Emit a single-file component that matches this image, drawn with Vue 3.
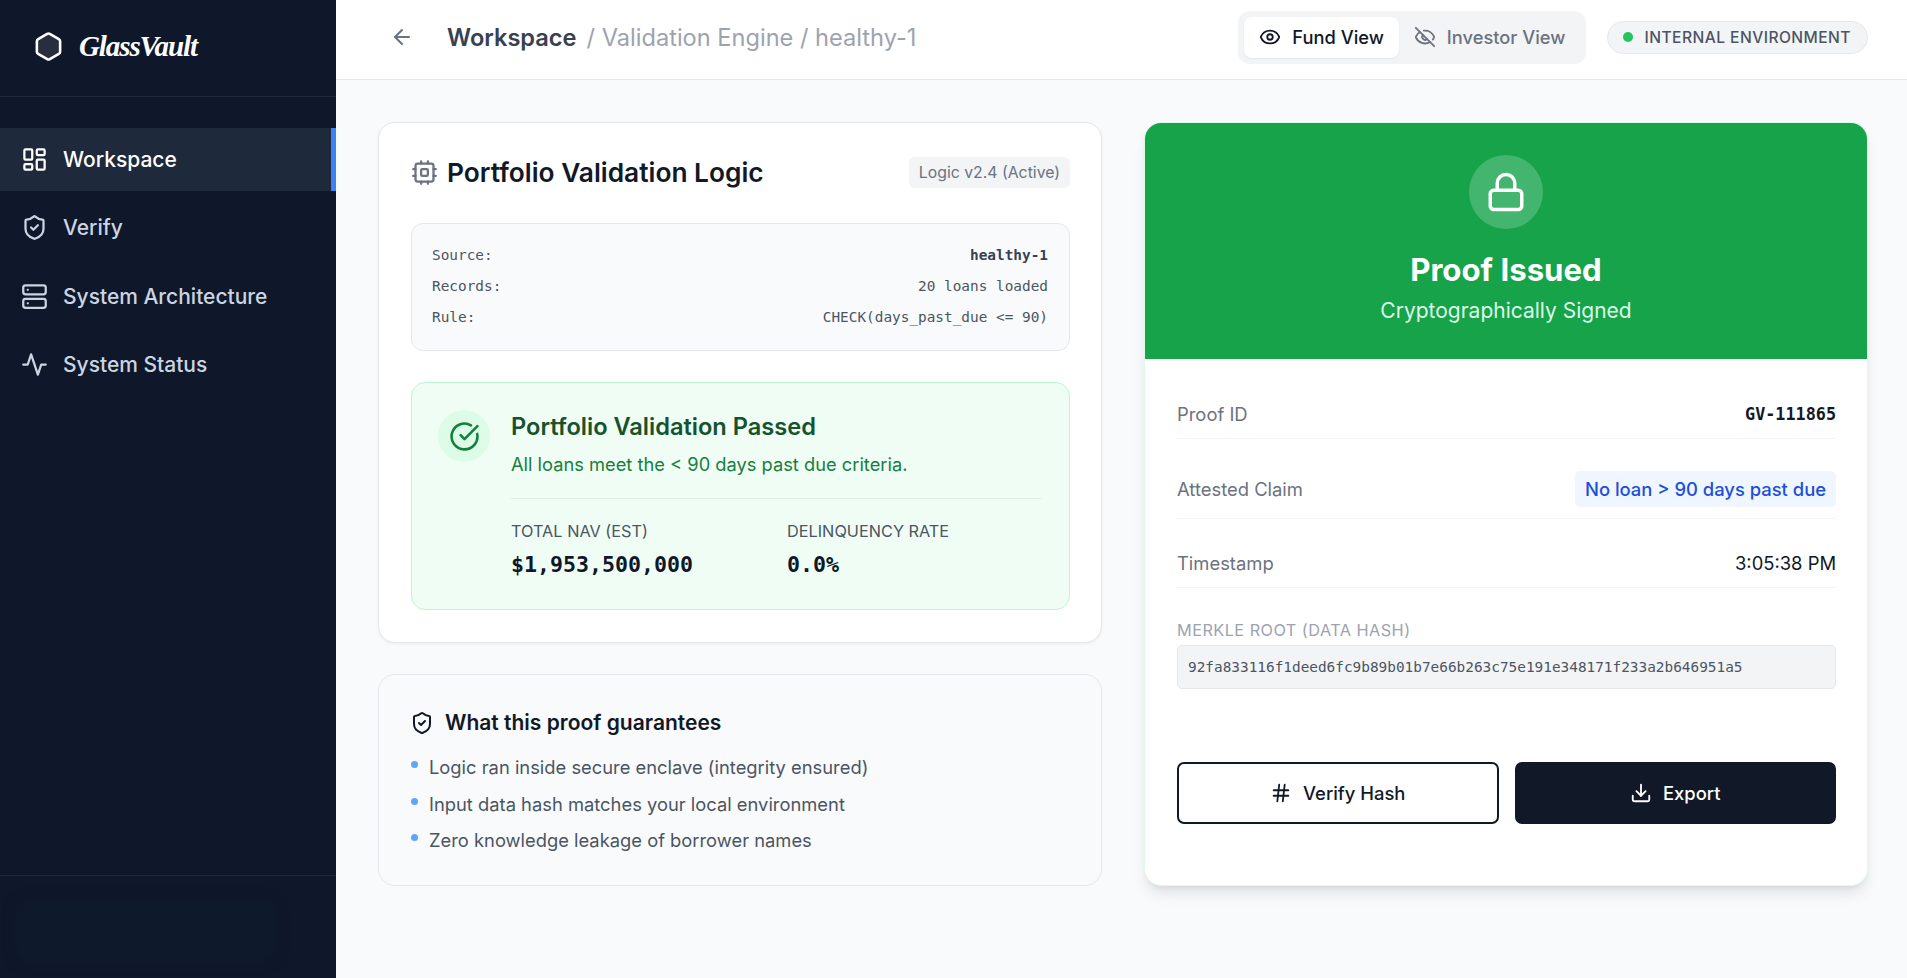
<script setup>
const navItems = [
  { label: 'Workspace', icon: 'dashboard', active: true },
  { label: 'Verify', icon: 'shield' },
  { label: 'System Architecture', icon: 'server' },
  { label: 'System Status', icon: 'activity' }
]

const sourceRows = [
  { label: 'Source:', value: 'healthy-1', bold: true },
  { label: 'Records:', value: '20 loans loaded' },
  { label: 'Rule:', value: 'CHECK(days_past_due <= 90)' }
]

const guarantees = [
  'Logic ran inside secure enclave (integrity ensured)',
  'Input data hash matches your local environment',
  'Zero knowledge leakage of borrower names'
]
</script>

<template>
  <div class="app">
    <aside class="sidebar">
      <div class="brand">
        <svg class="brand-icon" viewBox="0 0 24 24" fill="rgba(255,255,255,0.1)" stroke="currentColor" stroke-width="2" stroke-linecap="round" stroke-linejoin="round">
          <path d="M21 16V8a2 2 0 0 0-1-1.73l-7-4a2 2 0 0 0-2 0l-7 4A2 2 0 0 0 3 8v8a2 2 0 0 0 1 1.73l7 4a2 2 0 0 0 2 0l7-4A2 2 0 0 0 21 16z" />
        </svg>
        <span class="brand-name">GlassVault</span>
      </div>
      <nav class="nav">
        <a v-for="item in navItems" :key="item.label" class="nav-item" :class="{ active: item.active }">
          <svg class="nav-icon" viewBox="0 0 24 24" fill="none" stroke="currentColor" stroke-width="2" stroke-linecap="round" stroke-linejoin="round">
            <template v-if="item.icon === 'dashboard'">
              <rect x="3" y="3" width="7" height="9" rx="1" />
              <rect x="14" y="3" width="7" height="5" rx="1" />
              <rect x="14" y="12" width="7" height="9" rx="1" />
              <rect x="3" y="16" width="7" height="5" rx="1" />
            </template>
            <template v-else-if="item.icon === 'shield'">
              <path d="M20 13c0 5-3.5 7.5-7.66 8.95a1 1 0 0 1-.67-.01C7.5 20.5 4 18 4 13V6a1 1 0 0 1 1-1c2 0 4.5-1.2 6.24-2.72a1.17 1.17 0 0 1 1.52 0C14.51 3.81 17 5 19 5a1 1 0 0 1 1 1z" />
              <path d="m9 12 2 2 4-4" />
            </template>
            <template v-else-if="item.icon === 'server'">
              <rect x="2" y="2" width="20" height="8" rx="2" />
              <rect x="2" y="14" width="20" height="8" rx="2" />
              <line x1="6" y1="6" x2="6.01" y2="6" />
              <line x1="6" y1="18" x2="6.01" y2="18" />
            </template>
            <path v-else d="M22 12h-4l-3 9L9 3l-3 9H2" />
          </svg>
          <span>{{ item.label }}</span>
        </a>
      </nav>
      <div class="sidebar-footer">
        <div class="footer-smudge"></div>
      </div>
    </aside>

    <div class="content">
      <header class="topbar">
        <div class="crumbs">
          <svg class="back-icon" viewBox="0 0 24 24" fill="none" stroke="currentColor" stroke-width="2" stroke-linecap="round" stroke-linejoin="round">
            <path d="m12 19-7-7 7-7" />
            <path d="M19 12H5" />
          </svg>
          <span class="crumb-main">Workspace</span>
          <span class="crumb-rest">/ Validation Engine / healthy-1</span>
        </div>
        <div class="topbar-right">
          <div class="view-toggle">
            <button class="view-btn selected">
              <svg class="view-icon" viewBox="0 0 24 24" fill="none" stroke="currentColor" stroke-width="2" stroke-linecap="round" stroke-linejoin="round">
                <path d="M2.062 12.348a1 1 0 0 1 0-.696 10.75 10.75 0 0 1 19.876 0 1 1 0 0 1 0 .696 10.75 10.75 0 0 1-19.876 0" />
                <circle cx="12" cy="12" r="3" />
              </svg>
              Fund View
            </button>
            <button class="view-btn">
              <svg class="view-icon" viewBox="0 0 24 24" fill="none" stroke="currentColor" stroke-width="2" stroke-linecap="round" stroke-linejoin="round">
                <path d="M10.733 5.076a10.744 10.744 0 0 1 11.205 6.575 1 1 0 0 1 0 .696 10.747 10.747 0 0 1-1.444 2.49" />
                <path d="M14.084 14.158a3 3 0 0 1-4.242-4.242" />
                <path d="M17.479 17.499a10.75 10.75 0 0 1-15.417-5.151 1 1 0 0 1 0-.696 10.75 10.75 0 0 1 4.446-5.143" />
                <path d="m2 2 20 20" />
              </svg>
              Investor View
            </button>
          </div>
          <div class="env-pill">
            <span class="env-dot"></span>
            INTERNAL ENVIRONMENT
          </div>
        </div>
      </header>

      <main class="main">
        <div class="left-col">
          <section class="card logic-card">
            <div class="logic-head">
              <h2 class="logic-title">
                <svg class="cpu-icon" viewBox="0 0 24 24" fill="none" stroke="currentColor" stroke-width="2" stroke-linecap="round" stroke-linejoin="round">
                  <rect x="4" y="4" width="16" height="16" rx="2" />
                  <rect x="9" y="9" width="6" height="6" rx="1" />
                  <path d="M15 2v2M15 20v2M2 15h2M2 9h2M20 15h2M20 9h2M9 2v2M9 20v2" />
                </svg>
                Portfolio Validation Logic
              </h2>
              <span class="logic-badge">Logic v2.4 (Active)</span>
            </div>

            <div class="source-box">
              <div v-for="row in sourceRows" :key="row.label" class="source-row">
                <span>{{ row.label }}</span>
                <span :class="{ 'source-bold': row.bold }">{{ row.value }}</span>
              </div>
            </div>

            <div class="pass-box">
              <div class="pass-circle">
                <svg class="pass-icon" viewBox="0 0 24 24" fill="none" stroke="currentColor" stroke-width="2" stroke-linecap="round" stroke-linejoin="round">
                  <path d="M21.801 10A10 10 0 1 1 17 3.335" />
                  <path d="m9 11 3 3L22 4" />
                </svg>
              </div>
              <div class="pass-body">
                <h3 class="pass-title">Portfolio Validation Passed</h3>
                <p class="pass-sub">All loans meet the &lt; 90 days past due criteria.</p>
                <div class="pass-stats">
                  <div>
                    <div class="stat-label">TOTAL NAV (EST)</div>
                    <div class="stat-value">$1,953,500,000</div>
                  </div>
                  <div>
                    <div class="stat-label">DELINQUENCY RATE</div>
                    <div class="stat-value">0.0%</div>
                  </div>
                </div>
              </div>
            </div>
          </section>

          <section class="guarantee-card">
            <h3 class="guarantee-title">
              <svg class="guarantee-icon" viewBox="0 0 24 24" fill="none" stroke="currentColor" stroke-width="2" stroke-linecap="round" stroke-linejoin="round">
                <path d="M20 13c0 5-3.5 7.5-7.66 8.95a1 1 0 0 1-.67-.01C7.5 20.5 4 18 4 13V6a1 1 0 0 1 1-1c2 0 4.5-1.2 6.24-2.72a1.17 1.17 0 0 1 1.52 0C14.51 3.81 17 5 19 5a1 1 0 0 1 1 1z" />
                <path d="m9 12 2 2 4-4" />
              </svg>
              What this proof guarantees
            </h3>
            <ul class="guarantee-list">
              <li v-for="text in guarantees" :key="text">
                <span class="bullet"></span>
                {{ text }}
              </li>
            </ul>
          </section>
        </div>

        <section class="proof-card">
          <div class="proof-head">
            <div class="lock-circle">
              <svg class="lock-icon" viewBox="0 0 24 24" fill="none" stroke="currentColor" stroke-width="2" stroke-linecap="round" stroke-linejoin="round">
                <rect x="3" y="11" width="18" height="11" rx="2" />
                <path d="M7 11V7a5 5 0 0 1 10 0v4" />
              </svg>
            </div>
            <h2 class="proof-title">Proof Issued</h2>
            <p class="proof-sub">Cryptographically Signed</p>
          </div>
          <div class="proof-body">
            <div class="proof-row">
              <span class="proof-label">Proof ID</span>
              <span class="proof-id">GV-111865</span>
            </div>
            <div class="proof-row">
              <span class="proof-label">Attested Claim</span>
              <span class="claim-pill">No loan &gt; 90 days past due</span>
            </div>
            <div class="proof-row">
              <span class="proof-label">Timestamp</span>
              <span class="proof-time">3:05:38 PM</span>
            </div>
            <div class="merkle-label">MERKLE ROOT (DATA HASH)</div>
            <div class="merkle-hash">92fa833116f1deed6fc9b89b01b7e66b263c75e191e348171f233a2b646951a5</div>
            <div class="proof-actions">
              <button class="action-btn outline">
                <svg class="action-icon" viewBox="0 0 24 24" fill="none" stroke="currentColor" stroke-width="2" stroke-linecap="round" stroke-linejoin="round">
                  <line x1="4" y1="9" x2="20" y2="9" />
                  <line x1="4" y1="15" x2="20" y2="15" />
                  <line x1="10" y1="3" x2="8" y2="21" />
                  <line x1="16" y1="3" x2="14" y2="21" />
                </svg>
                Verify Hash
              </button>
              <button class="action-btn solid">
                <svg class="action-icon" viewBox="0 0 24 24" fill="none" stroke="currentColor" stroke-width="2" stroke-linecap="round" stroke-linejoin="round">
                  <path d="M21 15v4a2 2 0 0 1-2 2H5a2 2 0 0 1-2-2v-4" />
                  <path d="M7 10l5 5 5-5" />
                  <path d="M12 15V3" />
                </svg>
                Export
              </button>
            </div>
          </div>
        </section>
      </main>
    </div>
  </div>
</template>

<style>
html, body {
  margin: 0;
  background: #f9fafb;
}
</style>

<style scoped>
.app {
  display: flex;
  height: 978px;
  overflow: hidden;
  font-family: Inter, "Noto Sans", sans-serif;
  color: #111827;
}

.sidebar {
  width: 336px;
  flex-shrink: 0;
  display: flex;
  flex-direction: column;
  background: #0f172a;
  color: #cbd5e1;
}

.brand {
  height: 97px;
  box-sizing: border-box;
  display: flex;
  align-items: center;
  gap: 15px;
  padding: 0 0 4px 33px;
  border-bottom: 1px solid #1e293b;
  color: #fff;
}

.brand-icon {
  width: 31px;
  height: 31px;
}

.brand-name {
  font-family: "Liberation Serif", serif;
  font-style: italic;
  font-weight: 700;
  font-size: 29px;
  letter-spacing: -1.1px;
}

.nav {
  flex: 1;
  display: flex;
  flex-direction: column;
  gap: 5.4px;
  padding-top: 31px;
}

.nav-item {
  height: 63px;
  box-sizing: border-box;
  display: flex;
  align-items: center;
  gap: 15px;
  padding-left: 21px;
  font-size: 21px;
  font-weight: 500;
}

.nav-item.active {
  background: #1e293b;
  color: #fff;
  border-right: 5px solid #3b82f6;
}

.nav-icon {
  width: 27px;
  height: 27px;
}

.sidebar-footer {
  height: 103px;
  box-sizing: border-box;
  border-top: 1px solid #1e293b;
  padding: 24px 60px 10px 16px;
}

.footer-smudge {
  height: 62px;
  border-radius: 12px;
  background: #0e1a2b;
  filter: blur(6px);
}

.content {
  flex: 1;
  min-width: 0;
  display: flex;
  flex-direction: column;
}

.topbar {
  height: 80px;
  box-sizing: border-box;
  display: flex;
  align-items: center;
  justify-content: space-between;
  padding: 0 39px 5px 54px;
  background: #fff;
  border-bottom: 1px solid #e5e7eb;
}

.crumbs {
  display: flex;
  align-items: center;
}

.back-icon {
  width: 24px;
  height: 24px;
  color: #6b7280;
  margin-right: 33px;
}

.crumb-main {
  font-size: 23.6px;
  font-weight: 600;
  color: #374151;
}

.crumb-rest {
  margin-left: 10px;
  font-size: 23.6px;
  color: #9ca3af;
}

.topbar-right {
  display: flex;
  align-items: center;
  gap: 21px;
}

.view-toggle {
  display: flex;
  padding: 6px;
  border-radius: 12px;
  background: #f3f4f6;
}

.view-btn {
  height: 41px;
  display: flex;
  align-items: center;
  gap: 11px;
  padding: 0 15px;
  border: 0;
  border-radius: 8px;
  background: transparent;
  font-family: inherit;
  font-size: 18.3px;
  font-weight: 500;
  color: #6b7280;
}

.view-btn.selected {
  background: #fff;
  color: #111827;
  box-shadow: 0 1px 2px rgba(0, 0, 0, 0.06);
}

.view-icon {
  width: 22px;
  height: 22px;
}

.env-pill {
  height: 33px;
  box-sizing: border-box;
  display: flex;
  align-items: center;
  gap: 11px;
  padding: 0 16px 0 15px;
  border: 1px solid #e5e7eb;
  border-radius: 17px;
  background: #f3f4f6;
  font-size: 15.6px;
  font-weight: 500;
  letter-spacing: 0.45px;
  color: #4b5563;
}

.env-dot {
  width: 10px;
  height: 10px;
  border-radius: 50%;
  background: #22c55e;
}

.main {
  flex: 1;
  display: grid;
  grid-template-columns: 724px 724px;
  gap: 42px;
  align-items: start;
  padding: 42px 39px 0 42px;
}

.left-col {
  display: flex;
  flex-direction: column;
  gap: 31px;
}

.card {
  background: #fff;
  border: 1px solid #e5e7eb;
  border-radius: 17px;
  box-shadow: 0 1px 3px rgba(0, 0, 0, 0.06);
}

.logic-card {
  padding: 33px 31px 32px 32px;
}

.logic-head {
  height: 32px;
  display: flex;
  align-items: center;
  justify-content: space-between;
  margin-bottom: 35px;
}

.logic-title {
  display: flex;
  align-items: center;
  gap: 9px;
  margin: 0;
  font-size: 26.3px;
  font-weight: 600;
  color: #111827;
}

.cpu-icon {
  width: 27px;
  height: 27px;
  color: #6b7280;
}

.logic-badge {
  padding: 6px 10px;
  border-radius: 6px;
  background: #f3f4f6;
  font-size: 15.8px;
  color: #6b7280;
}

.source-box {
  display: flex;
  flex-direction: column;
  gap: 13px;
  padding: 22px 21px 24px 20px;
  margin-bottom: 31px;
  border: 1px solid #e5e7eb;
  border-radius: 12px;
  background: #f9fafb;
  font-family: "DejaVu Sans Mono", monospace;
  font-size: 14.4px;
  line-height: 18px;
  color: #4b5563;
}

.source-row {
  display: flex;
  justify-content: space-between;
}

.source-bold {
  font-weight: 700;
  color: #374151;
}

.pass-box {
  display: flex;
  gap: 21px;
  padding: 27px 28px 31px 26px;
  border: 1px solid #bbf7d0;
  border-radius: 14px;
  background: #f0fdf4;
}

.pass-circle {
  width: 52px;
  height: 52px;
  flex-shrink: 0;
  display: flex;
  align-items: center;
  justify-content: center;
  border-radius: 50%;
  background: #dcfce7;
}

.pass-icon {
  width: 31px;
  height: 31px;
  color: #15803d;
}

.pass-body {
  flex: 1;
  padding-top: 2px;
}

.pass-title {
  margin: 0;
  font-size: 23.6px;
  line-height: 30px;
  font-weight: 600;
  color: #14532d;
}

.pass-sub {
  margin: 10px 0 0;
  font-size: 18.3px;
  line-height: 24px;
  color: #15803d;
}

.pass-stats {
  display: grid;
  grid-template-columns: 276px 1fr;
  margin-top: 22px;
  padding-top: 22px;
  border-top: 1px solid #dfeee6;
}

.stat-label {
  font-size: 16.3px;
  line-height: 20px;
  color: #4b5563;
}

.stat-value {
  margin-top: 11px;
  font-family: "DejaVu Sans Mono", monospace;
  font-size: 21.6px;
  line-height: 26px;
  font-weight: 700;
  color: #0f172a;
}

.guarantee-card {
  padding: 33px 32px 32px;
  border: 1px solid #e5e7eb;
  border-radius: 17px;
  background: #f9fafb;
}

.guarantee-title {
  display: flex;
  align-items: center;
  gap: 11px;
  margin: 0 0 17px;
  font-size: 21px;
  line-height: 30px;
  font-weight: 600;
  color: #111827;
}

.guarantee-icon {
  width: 24px;
  height: 24px;
  margin-left: -1px;
}

.guarantee-list {
  margin: 0;
  padding: 0;
  list-style: none;
  display: flex;
  flex-direction: column;
  gap: 12px;
  font-size: 18.35px;
  line-height: 24.5px;
  color: #4b5563;
}

.guarantee-list li {
  display: flex;
  align-items: flex-start;
  gap: 11px;
}

.bullet {
  width: 7px;
  height: 7px;
  margin-top: 6px;
  flex-shrink: 0;
  border-radius: 50%;
  background: #60a5fa;
}

.proof-card {
  height: 764px;
  box-sizing: border-box;
  border: 1px solid #dcfce7;
  border-radius: 17px;
  overflow: hidden;
  background: #fff;
  box-shadow: 0 10px 15px -3px rgba(0, 0, 0, 0.1), 0 4px 6px -4px rgba(0, 0, 0, 0.1);
}

.proof-head {
  height: 236px;
  display: flex;
  flex-direction: column;
  align-items: center;
  padding-top: 32px;
  box-sizing: border-box;
  background: #16a34a;
  color: #fff;
}

.lock-circle {
  width: 74px;
  height: 74px;
  display: flex;
  align-items: center;
  justify-content: center;
  border-radius: 50%;
  background: rgba(255, 255, 255, 0.2);
}

.lock-icon {
  width: 42px;
  height: 42px;
}

.proof-title {
  margin: 21px 0 0;
  font-size: 31.2px;
  line-height: 40px;
  font-weight: 700;
}

.proof-sub {
  margin: 7px 0 0;
  font-size: 21px;
  line-height: 28px;
  color: #dcfce7;
}

.proof-body {
  padding: 44px 31px 0 32px;
}

.proof-row {
  display: flex;
  align-items: center;
  justify-content: space-between;
  padding-bottom: 12px;
  margin-bottom: 33px;
  border-bottom: 1px solid #f3f4f6;
  font-size: 18.4px;
  line-height: 23px;
}

.proof-label {
  color: #6b7280;
}

.proof-id {
  font-family: "DejaVu Sans Mono", monospace;
  font-size: 16.8px;
  font-weight: 700;
  color: #111827;
}

.claim-pill {
  margin: -1px 0;
  padding: 6px 10px;
  border-radius: 5px;
  background: #eff6ff;
  color: #1d4ed8;
  font-weight: 500;
  line-height: 24px;
}

.proof-time {
  color: #111827;
}

.merkle-label {
  font-size: 16.3px;
  line-height: 18px;
  letter-spacing: 0.45px;
  color: #9ca3af;
  margin-bottom: 6px;
}

.merkle-hash {
  height: 44px;
  box-sizing: border-box;
  display: flex;
  align-items: center;
  padding: 0 10px;
  border: 1px solid #e5e7eb;
  border-radius: 5px;
  background: #f3f4f6;
  font-family: "DejaVu Sans Mono", monospace;
  font-size: 14.4px;
  color: #4b5563;
}

.proof-actions {
  display: grid;
  grid-template-columns: 1fr 1fr;
  gap: 16px;
  margin-top: 73px;
}

.action-btn {
  height: 62px;
  display: flex;
  align-items: center;
  justify-content: center;
  gap: 11px;
  border-radius: 7px;
  font-family: inherit;
  font-size: 18.4px;
  font-weight: 500;
}

.action-btn.outline {
  border: 2px solid #111827;
  background: #fff;
  color: #111827;
}

.action-btn.solid {
  border: 2px solid #111827;
  background: #111827;
  color: #fff;
}

.action-icon {
  width: 22px;
  height: 22px;
}
</style>
